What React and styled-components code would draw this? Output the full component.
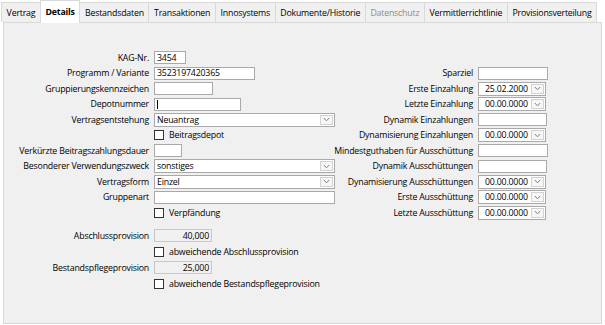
import React from "react";
import styled, { createGlobalStyle, css } from "styled-components";

const GlobalStyle = createGlobalStyle`
  body {
    margin: 0;
    background: #ffffff;
    font-family: "Open Sans", "Noto Sans", sans-serif;
    font-size: 8.8px;
    letter-spacing: -0.2px;
    color: #000;
  }
`;

const Window = styled.div`
  width: 605px;
  height: 325px;
  overflow: hidden;
  background: #ffffff;
`;

const TabStrip = styled.div`
  display: flex;
  align-items: flex-end;
  height: 22px;
  padding-left: 2px;
`;

const Tab = styled.div`
  height: 19px;
  padding: 0 4.6px;
  display: flex;
  align-items: center;
  border: 1px solid #d9d9d9;
  border-bottom: none;
  margin-left: -1px;
  background: #f0f0f0;
  color: ${(p) => (p.$disabled ? "#8c8c8c" : "#000")};
  white-space: nowrap;

  ${(p) =>
    p.$active &&
    css`
      height: 22px;
      margin-bottom: -1px;
      background: #ffffff;
      font-weight: 700;
      position: relative;
      z-index: 1;
    `}
`;

const Panel = styled.div`
  margin-left: 3px;
  width: 599px;
  height: 302px;
  box-sizing: border-box;
  border: 1px solid #d9d9d9;
  background: #f0f0f0;
  padding-top: 27px;
`;

const Form = styled.div`
  display: grid;
  grid-template-columns: 150px 180px 144px 70px;
  grid-auto-rows: ${(p) => p.$pitch || 15.5}px;
  align-items: center;
  margin-top: ${(p) => p.$offset || 0}px;
`;

const Label = styled.div`
  display: flex;
  justify-content: flex-end;
  padding-right: 5px;
  white-space: nowrap;
`;

const Input = styled.div`
  box-sizing: border-box;
  width: ${(p) => p.$w}px;
  height: 13px;
  border: 1px solid ${(p) => (p.$disabled ? "#c8c8c8" : "#a9a9a9")};
  background: ${(p) => (p.$disabled ? "#f0f0f0" : "#ffffff")};
  display: flex;
  align-items: center;
  justify-content: ${(p) => (p.$right ? "flex-end" : "flex-start")};
  padding: 0 2px;
  white-space: nowrap;
  overflow: hidden;
`;

const Caret = styled.span`
  width: 1px;
  height: 9px;
  background: #000;
`;

const Combo = styled.div`
  box-sizing: border-box;
  width: ${(p) => p.$w}px;
  height: 14px;
  border: 1px solid #a9a9a9;
  background: #ffffff;
  display: flex;
  align-items: stretch;
`;

const ComboText = styled.div`
  flex: 1;
  display: flex;
  align-items: center;
  padding-left: ${(p) => p.$pad || 2}px;
  white-space: nowrap;
`;

const DropButton = styled.div`
  width: 13px;
  margin: 1px;
  box-sizing: border-box;
  border: 1px solid #d2d2d2;
  background: #f7f7f7;
  display: flex;
  align-items: center;
  justify-content: center;
`;

const CheckRow = styled.div`
  display: flex;
  align-items: center;
  gap: 5px;
  white-space: nowrap;
`;

const Box = styled.span`
  width: 10px;
  height: 10px;
  box-sizing: border-box;
  border: 1px solid #333;
  background: #fff;
`;

const Chevron = () => (
  <svg width="7" height="5" viewBox="0 0 7 5">
    <path d="M0.8 1 L3.5 3.8 L6.2 1" fill="none" stroke="#6f7f96" strokeWidth="1" />
  </svg>
);

const tabs = [
  "Vertrag",
  "Details",
  "Bestandsdaten",
  "Transaktionen",
  "Innosystems",
  "Dokumente/Historie",
  "Datenschutz",
  "Vermittlerrichtlinie",
  "Provisionsverteilung",
];

const left = [
  { label: "KAG-Nr.", type: "input", w: 32, value: "3454" },
  { label: "Programm / Variante", type: "input", w: 101, value: "3523197420365" },
  { label: "Gruppierungskennzeichen", type: "input", w: 59 },
  { label: "Depotnummer", type: "input", w: 87, caret: true },
  { label: "Vertragsentstehung", type: "combo", value: "Neuantrag" },
  { type: "check", value: "Beitragsdepot" },
  { label: "Verkürzte Beitragszahlungsdauer", type: "input", w: 28 },
  { label: "Besonderer Verwendungszweck", type: "combo", value: "sonstiges" },
  { label: "Vertragsform", type: "combo", value: "Einzel" },
  { label: "Gruppenart", type: "input", w: 181 },
  { type: "check", value: "Verpfändung" },
];

const right = [
  null,
  { label: "Sparziel", type: "input", w: 70 },
  { label: "Erste Einzahlung", type: "date", value: "25.02.2000" },
  { label: "Letzte Einzahlung", type: "date", value: "00.00.0000" },
  { label: "Dynamik Einzahlungen", type: "input", w: 69 },
  { label: "Dynamisierung Einzahlungen", type: "date", value: "00.00.0000" },
  { label: "Mindestguthaben für Ausschüttung", type: "input", w: 70 },
  { label: "Dynamik Ausschüttungen", type: "input", w: 69 },
  { label: "Dynamisierung Ausschüttungen", type: "date", value: "00.00.0000" },
  { label: "Erste Ausschüttung", type: "date", value: "00.00.0000" },
  { label: "Letzte Ausschüttung", type: "date", value: "00.00.0000" },
];

const provisions = [
  { label: "Abschlussprovision", type: "input", w: 58, value: "40,000", disabled: true },
  { type: "check", value: "abweichende Abschlussprovision" },
  { label: "Bestandspflegeprovision", type: "input", w: 58, value: "25,000", disabled: true },
  { type: "check", value: "abweichende Bestandspflegeprovision" },
];

const renderField = (f) => {
  if (f.type === "combo") {
    return (
      <Combo $w={181}>
        <ComboText>{f.value}</ComboText>
        <DropButton>
          <Chevron />
        </DropButton>
      </Combo>
    );
  }
  if (f.type === "date") {
    return (
      <Combo $w={68}>
        <ComboText $pad={6}>{f.value}</ComboText>
        <DropButton>
          <Chevron />
        </DropButton>
      </Combo>
    );
  }
  return (
    <Input $w={f.w} $disabled={f.disabled} $right={f.disabled}>
      {f.caret ? <Caret /> : f.value}
    </Input>
  );
};

const renderCells = (f, key) => {
  if (!f) {
    return [<span key={key + "a"} />, <span key={key + "b"} />];
  }
  if (f.type === "check") {
    return [
      <span key={key + "a"} />,
      <CheckRow key={key + "b"}>
        <Box />
        {f.value}
      </CheckRow>,
    ];
  }
  return [
    <Label key={key + "a"}>{f.label}</Label>,
    <div key={key + "b"}>{renderField(f)}</div>,
  ];
};

const App = () => {
  return (
    <Window>
      <GlobalStyle />
      <TabStrip>
        {tabs.map((t) => (
          <Tab key={t} $active={t === "Details"} $disabled={t === "Datenschutz"}>
            {t}
          </Tab>
        ))}
      </TabStrip>
      <Panel>
        <Form>
          {left.map((f, i) => [
            ...renderCells(f, "l" + i),
            ...renderCells(right[i], "r" + i),
          ])}
        </Form>
        <Form $offset={7} $pitch={16}>
          {provisions.map((f, i) => [
            ...renderCells(f, "p" + i),
            <span key={"x" + i} />,
            <span key={"y" + i} />,
          ])}
        </Form>
      </Panel>
    </Window>
  );
};

export default App;
